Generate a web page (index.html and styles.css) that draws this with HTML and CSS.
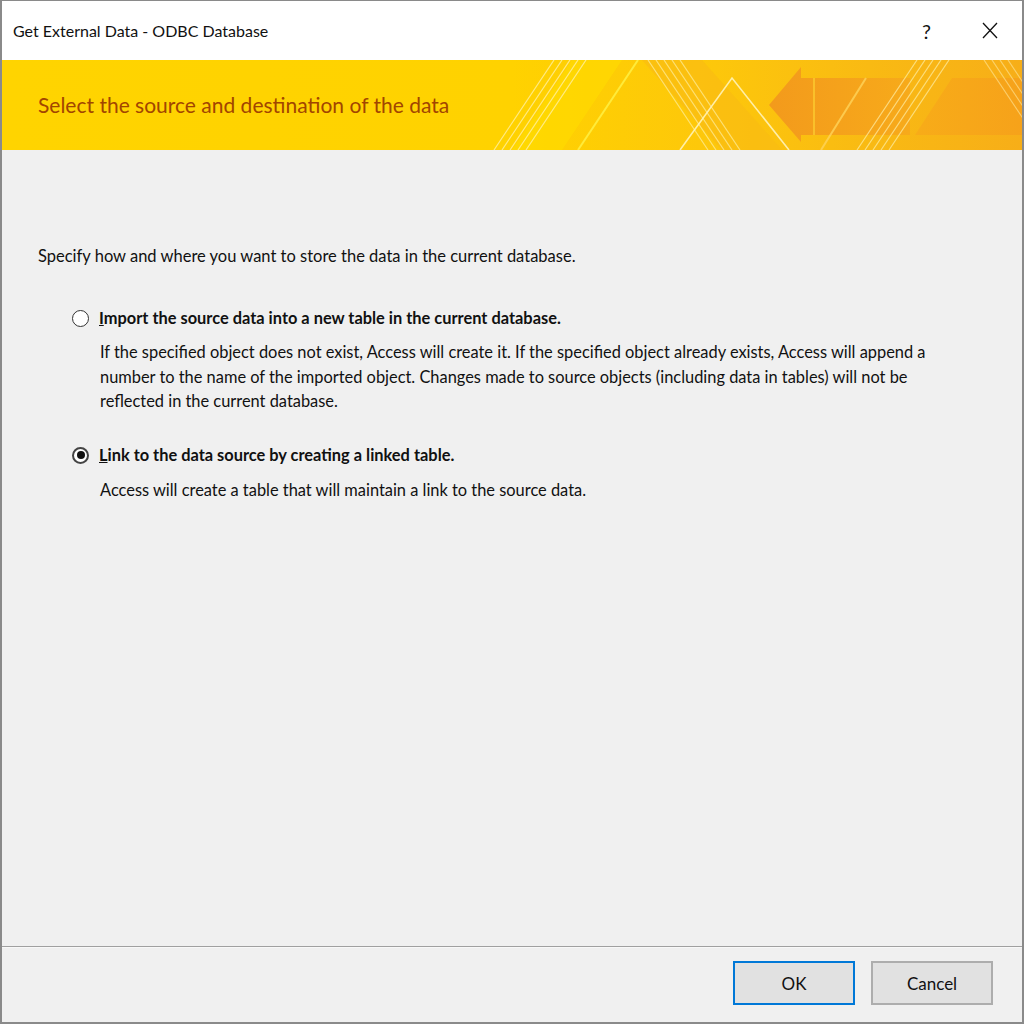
FILE: index.html
```html
<!DOCTYPE html>
<html lang="en">
<head>
<meta charset="utf-8">
<title>Get External Data - ODBC Database</title>
<link rel="stylesheet" href="styles.css">
</head>
<body>
<div class="window">
  <div class="titlebar">
    <span class="title">Get External Data - ODBC Database</span>
    <div class="controls">
      <span class="help">?</span>
      <svg class="close" width="16" height="17" viewBox="0 0 16 17"><path d="M1 1 L15 16 M15 1 L1 16" stroke="#111" stroke-width="1.3" fill="none"/></svg>
    </div>
  </div>
  <div class="banner">
    <svg class="banner-art" width="1020" height="90" viewBox="0 0 1020 90" preserveAspectRatio="none">
      <defs>
        <linearGradient id="bg" x1="0" y1="0" x2="1" y2="0">
          <stop offset="0" stop-color="#FFD400"/>
          <stop offset="0.5" stop-color="#FFD200"/>
          <stop offset="0.7" stop-color="#FDC70B"/>
          <stop offset="0.85" stop-color="#F9BA13"/>
          <stop offset="1" stop-color="#F7AE18"/>
        </linearGradient>
        <linearGradient id="arrow" x1="0" y1="0" x2="1" y2="0">
          <stop offset="0" stop-color="#F39A1C"/>
          <stop offset="1" stop-color="#F7AA1A"/>
        </linearGradient>
        <linearGradient id="block" x1="0" y1="0" x2="1" y2="0">
          <stop offset="0" stop-color="#F8AC18"/>
          <stop offset="1" stop-color="#F6A21A"/>
        </linearGradient>
      </defs>
      <rect x="0" y="0" width="1020" height="90" fill="url(#bg)"/>
      <polygon points="570,0 620,0 560,90 510,90" fill="#FFDC00" opacity="0.6"/>
      <polygon points="640,0 700,0 780,90 720,90" fill="#F9BC12" opacity="0.7"/>
      <g stroke="#FFF3B0" stroke-width="1.2" opacity="0.75">
        <line x1="552" y1="0" x2="492" y2="90"/>
        <line x1="560" y1="0" x2="500" y2="90"/>
        <line x1="568" y1="0" x2="508" y2="90"/>
        <line x1="576" y1="0" x2="516" y2="90"/>
        <line x1="584" y1="0" x2="524" y2="90"/>
      </g>
      <line x1="636" y1="0" x2="576" y2="90" stroke="#FFEB3A" stroke-width="2"/>
      <g stroke="#FFF0A0" stroke-width="1.2" opacity="0.7">
        <line x1="646" y1="0" x2="706" y2="90"/>
        <line x1="654" y1="0" x2="714" y2="90"/>
        <line x1="662" y1="0" x2="722" y2="90"/>
        <line x1="670" y1="0" x2="730" y2="90"/>
        <line x1="678" y1="0" x2="738" y2="90"/>
      </g>
      <polyline points="678,90 730,18 787,90" fill="none" stroke="#FFF3B8" stroke-width="1.6" opacity="0.9"/>
      <polygon points="767,45 799,7 799,18 908,18 908,75 799,75 799,82" fill="url(#arrow)"/>
      <polygon points="950,18 1020,18 1020,75 913,75" fill="url(#block)"/>
      <line x1="812" y1="18" x2="812" y2="75" stroke="#FAC02A" stroke-width="2"/>
      <line x1="864" y1="18" x2="819" y2="90" stroke="#FFD45A" stroke-width="2" opacity="0.8"/>
      <g stroke="#FFF0A8" stroke-width="1.2" opacity="0.7">
        <line x1="915" y1="0" x2="855" y2="90"/>
        <line x1="923" y1="0" x2="863" y2="90"/>
        <line x1="931" y1="0" x2="871" y2="90"/>
        <line x1="939" y1="0" x2="879" y2="90"/>
        <line x1="947" y1="0" x2="887" y2="90"/>
      </g>
      <g stroke="#FFE9A0" stroke-width="1.2" opacity="0.6">
        <line x1="982" y1="0" x2="1042" y2="90"/>
        <line x1="990" y1="0" x2="1050" y2="90"/>
        <line x1="998" y1="0" x2="1058" y2="90"/>
        <line x1="1006" y1="0" x2="1066" y2="90"/>
      </g>
    </svg>
    <h1 class="banner-title">Select the source and destination of the data</h1>
  </div>
  <div class="content">
    <p class="intro">Specify how and where you want to store the data in the current database.</p>
    <div class="option">
      <span class="radio"></span>
      <div class="option-body">
        <div class="option-label"><u>I</u>mport the source data into a new table in the current database.</div>
        <p class="option-desc">If the specified object does not exist, Access will create it. If the specified object already exists, Access will append a number to the name of the imported object. Changes made to source objects (including data in tables) will not be reflected in the current database.</p>
      </div>
    </div>
    <div class="option option-second">
      <span class="radio checked"></span>
      <div class="option-body">
        <div class="option-label"><u>L</u>ink to the data source by creating a linked table.</div>
        <p class="option-desc">Access will create a table that will maintain a link to the source data.</p>
      </div>
    </div>
  </div>
  <div class="footer">
    <button class="btn btn-primary">OK</button>
    <button class="btn">Cancel</button>
  </div>
</div>
</body>
</html>
```
FILE: styles.css
```css
* { box-sizing: border-box; }
html, body { margin: 0; padding: 0; }
body {
  width: 1024px;
  height: 1024px;
  font-family: Lato, "Liberation Sans", sans-serif;
  color: #111;
  background: #f0f0f0;
}
.window {
  width: 1024px;
  height: 1024px;
  border: 2px solid #8a8a8a;
  border-top-width: 1px;
  display: flex;
  flex-direction: column;
  background: #f0f0f0;
}
.titlebar {
  height: 59px;
  background: #fff;
  display: flex;
  align-items: center;
  justify-content: space-between;
  padding-left: 11px;
  padding-right: 24px;
}
.title {
  font-size: 16px;
  color: #111;
}
.controls {
  display: flex;
  align-items: center;
  gap: 50px;
}
.help {
  font-size: 20px;
  color: #111;
  width: 10px;
}
.close { display: block; }
.banner {
  position: relative;
  height: 90px;
  display: flex;
  align-items: center;
  padding-left: 36px;
  overflow: hidden;
}
.banner-art {
  position: absolute;
  left: 0;
  top: 0;
}
.banner-title {
  position: relative;
  margin: 0;
  font-weight: normal;
  font-size: 21px;
  color: #a24500;
  padding-bottom: 2px;
}
.content {
  flex: 1;
  padding: 96px 36px 0 36px;
}
.intro {
  margin: 0;
  font-size: 16.5px;
  line-height: 20px;
}
.option {
  display: flex;
  align-items: flex-start;
  margin-top: 42px;
  padding-left: 34px;
}
.option-second { margin-top: 31px; }
.radio {
  flex: none;
  width: 17px;
  height: 17px;
  border-radius: 50%;
  border: 1px solid #333;
  background: #fff;
  margin-top: 2px;
  margin-right: 10px;
  position: relative;
}
.radio.checked {
  border: 2px solid #444;
  background: #fff;
}
.radio.checked::after {
  content: "";
  position: absolute;
  left: 2.5px;
  top: 2.5px;
  width: 8px;
  height: 8px;
  border-radius: 50%;
  background: #111;
}
.option-label {
  font-weight: bold;
  font-size: 16.4px;
  line-height: 20px;
}
.option-desc {
  margin: 12px 0 0 1px;
  font-size: 16.4px;
  line-height: 24.5px;
  max-width: 852px;
}
.option-second .option-desc { margin-top: 13px; }
.footer {
  height: 76px;
  border-top: 1px solid #a0a0a0;
  box-shadow: inset 0 1px 0 #f8f8f8;
  display: flex;
  justify-content: flex-end;
  align-items: flex-start;
  gap: 16px;
  padding-top: 14px;
  padding-right: 29px;
}
.btn {
  width: 122px;
  height: 44px;
  background: #e1e1e1;
  border: 2px solid #adadad;
  font-family: Lato, "Liberation Sans", sans-serif;
  font-size: 17px;
  color: #111;
  padding: 0;
}
.btn-primary {
  border-color: #0078d7;
}
```
